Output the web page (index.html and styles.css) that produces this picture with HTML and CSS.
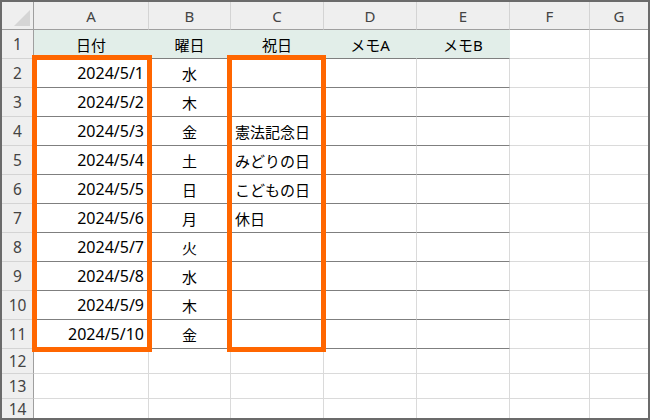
FILE: index.html
```html
<!DOCTYPE html>
<html lang="ja">
<head>
<meta charset="utf-8">
<title>Sheet</title>
<link rel="stylesheet" href="styles.css">
</head>
<body>
<div class="sheet">
  <div class="grid">
    <div class="corner"><span class="tri"></span></div>
    <div class="ch">A</div><div class="ch">B</div><div class="ch">C</div><div class="ch">D</div><div class="ch">E</div><div class="ch">F</div><div class="ch last">G</div>

    <div class="rh">1</div>
    <div class="c hd">日付</div><div class="c hd">曜日</div><div class="c hd">祝日</div><div class="c hd">メモA</div><div class="c hd">メモB</div><div class="c"></div><div class="c last"></div>

    <div class="rh">2</div>
    <div class="c t date">2024/5/1</div><div class="c t ctr">水</div><div class="c t txt"></div><div class="c t"></div><div class="c t"></div><div class="c"></div><div class="c last"></div>

    <div class="rh">3</div>
    <div class="c t date">2024/5/2</div><div class="c t ctr">木</div><div class="c t txt"></div><div class="c t"></div><div class="c t"></div><div class="c"></div><div class="c last"></div>

    <div class="rh">4</div>
    <div class="c t date">2024/5/3</div><div class="c t ctr">金</div><div class="c t txt">憲法記念日</div><div class="c t"></div><div class="c t"></div><div class="c"></div><div class="c last"></div>

    <div class="rh">5</div>
    <div class="c t date">2024/5/4</div><div class="c t ctr">土</div><div class="c t txt">みどりの日</div><div class="c t"></div><div class="c t"></div><div class="c"></div><div class="c last"></div>

    <div class="rh">6</div>
    <div class="c t date">2024/5/5</div><div class="c t ctr">日</div><div class="c t txt">こどもの日</div><div class="c t"></div><div class="c t"></div><div class="c"></div><div class="c last"></div>

    <div class="rh">7</div>
    <div class="c t date">2024/5/6</div><div class="c t ctr">月</div><div class="c t txt">休日</div><div class="c t"></div><div class="c t"></div><div class="c"></div><div class="c last"></div>

    <div class="rh">8</div>
    <div class="c t date">2024/5/7</div><div class="c t ctr">火</div><div class="c t txt"></div><div class="c t"></div><div class="c t"></div><div class="c"></div><div class="c last"></div>

    <div class="rh">9</div>
    <div class="c t date">2024/5/8</div><div class="c t ctr">水</div><div class="c t txt"></div><div class="c t"></div><div class="c t"></div><div class="c"></div><div class="c last"></div>

    <div class="rh">10</div>
    <div class="c t date">2024/5/9</div><div class="c t ctr">木</div><div class="c t txt"></div><div class="c t"></div><div class="c t"></div><div class="c"></div><div class="c last"></div>

    <div class="rh">11</div>
    <div class="c t date">2024/5/10</div><div class="c t ctr">金</div><div class="c t txt"></div><div class="c t"></div><div class="c t"></div><div class="c"></div><div class="c last"></div>

    <div class="rh">12</div>
    <div class="c"></div><div class="c"></div><div class="c"></div><div class="c"></div><div class="c"></div><div class="c"></div><div class="c last"></div>

    <div class="rh">13</div>
    <div class="c"></div><div class="c"></div><div class="c"></div><div class="c"></div><div class="c"></div><div class="c"></div><div class="c last"></div>

    <div class="rh bottom">14</div>
    <div class="c bottom"></div><div class="c bottom"></div><div class="c bottom"></div><div class="c bottom"></div><div class="c bottom"></div><div class="c bottom"></div><div class="c bottom last"></div>
  </div>
  <div class="hl hl-a"></div>
  <div class="hl hl-c"></div>
</div>
</body>
</html>
```

FILE: styles.css
```css
html, body {
  margin: 0;
  padding: 0;
  background: #ffffff;
}

.sheet {
  position: relative;
  width: 650px;
  height: 420px;
  box-sizing: border-box;
  border: 2px solid #6b6b6b;
  overflow: hidden;
  background: #ffffff;
  font-family: "Noto Sans", "Noto Sans CJK JP", sans-serif;
  font-size: 15px;
  color: #000000;
}

.grid {
  display: grid;
  grid-template-columns: 32px 115px 82px 93px 93px 93px 80px 58px;
  grid-template-rows: 28px 29px repeat(10, 29px) 25px 25px 19px;
}

.grid > div {
  box-sizing: border-box;
  border-right: 1px solid #dadada;
  border-bottom: 1px solid #dadada;
  display: flex;
  align-items: center;
  white-space: nowrap;
  overflow: hidden;
}

.grid > .last {
  border-right: none;
}

.grid > .bottom {
  border-bottom: none;
}

.corner {
  background: #efefef;
  justify-content: flex-end;
  align-items: flex-end !important;
  padding: 0 3px 3px 0;
  border-right-color: #9f9f9f !important;
  border-bottom-color: #9f9f9f !important;
}

.tri {
  display: block;
  width: 0;
  height: 0;
  border-left: 16px solid transparent;
  border-bottom: 16px solid #d5d5d5;
}

.ch {
  background: #efefef;
  justify-content: center;
  color: #444444;
  border-right-color: #d4d4d4 !important;
  border-bottom-color: #9f9f9f !important;
  padding-top: 1px;
}

.rh {
  background: #efefef;
  justify-content: center;
  color: #444444;
  font-size: 15.5px;
  border-right-color: #9f9f9f !important;
  border-bottom-color: #d4d4d4 !important;
}

.hd {
  background: #e2eee9;
  justify-content: center;
  border-right-color: #e2eee9 !important;
  border-bottom-color: #7f7f7f !important;
}

.t {
  border-bottom-color: #7f7f7f !important;
}

.date {
  justify-content: flex-end;
  padding-right: 4px;
  font-size: 16px;
}

.ctr {
  justify-content: center;
}

.txt {
  justify-content: flex-start;
  padding-left: 4px;
}

.hl {
  position: absolute;
  box-sizing: border-box;
  border: 5px solid #ff6600;
}

.hl-a {
  left: 30px;
  top: 53px;
  width: 120px;
  height: 297px;
}

.hl-c {
  left: 225px;
  top: 53px;
  width: 99px;
  height: 297px;
}
```
